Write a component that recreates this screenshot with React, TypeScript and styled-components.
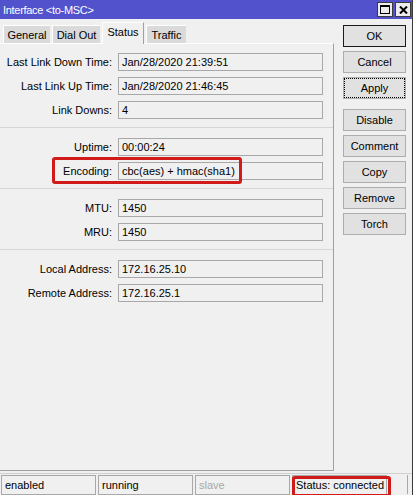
import React from 'react';
import styled, { createGlobalStyle, css } from 'styled-components';

const GlobalStyle = createGlobalStyle`
  html, body {
    margin: 0;
    padding: 0;
    background: #fff;
  }
  body {
    font-family: 'Liberation Sans', Arial, sans-serif;
    font-size: 11px;
  }
  * {
    box-sizing: border-box;
  }
`;

const Window = styled.div`
  width: 413px;
  height: 495px;
  display: flex;
  flex-direction: column;
  background: #f0f0f0;
  border-right: 1px solid #3a3a3a;
  color: #000;
`;

const TitleBar = styled.div`
  height: 19px;
  flex: none;
  display: flex;
  align-items: center;
  padding: 0 1px 0 3px;
  background: #5252cd;
  color: #fff;
`;

const Title = styled.span`
  font-size: 11px;
  letter-spacing: -0.3px;
`;

const TitleButtons = styled.div`
  margin-left: auto;
  display: flex;
  gap: 2px;
`;

const TitleButton = styled.div`
  width: 16px;
  height: 15px;
  display: flex;
  align-items: center;
  justify-content: center;
  background: #ececec;
  border: 1px solid #3c3c3c;
`;

const Main = styled.div`
  flex: 1;
  display: flex;
  min-height: 0;
`;

const LeftColumn = styled.div`
  width: 334px;
  display: flex;
  flex-direction: column;
  padding-top: 3px;
`;

const TabStrip = styled.div`
  height: 21px;
  flex: none;
  display: flex;
  align-items: flex-end;
  gap: 2px;
  padding-left: 3px;
  position: relative;
  z-index: 1;
`;

const Tab = styled.div<{ $active?: boolean; $width: number }>`
  width: ${(p) => p.$width}px;
  height: 18px;
  display: flex;
  align-items: center;
  justify-content: center;
  background: #dadada;
  border-top: 1px solid #fff;
  border-left: 1px solid #fff;
  white-space: nowrap;

  ${(p) =>
    p.$active &&
    css`
      height: 22px;
      margin-bottom: -1px;
      padding-bottom: 4px;
      background: #f0f0f0;
      border-right: 1px solid #a0a0a0;
    `}
`;

const Panel = styled.div`
  flex: 1;
  border-top: 1px solid #fff;
  border-right: 1px solid #a0a0a0;
  border-bottom: 1px solid #a0a0a0;
`;

const Section = styled.div`
  display: flex;
  flex-direction: column;
  gap: 6px;
  padding: 9px 0 8px;

  & + & {
    border-top: 1px solid #d6d6d6;
    padding-top: 10px;
  }
`;

const Row = styled.div`
  position: relative;
  display: grid;
  grid-template-columns: 112px 205px;
  column-gap: 6px;
  align-items: center;
  height: 18px;
`;

const Label = styled.span`
  text-align: right;
  white-space: nowrap;
`;

const Field = styled.div`
  height: 18px;
  display: flex;
  align-items: center;
  padding: 0 3px;
  border: 1px solid #a8a8a8;
  background: #f0f0f0;
  white-space: nowrap;
`;

const Highlight = styled.div<{ $left: number; $top: number; $width: number; $height: number }>`
  position: absolute;
  left: ${(p) => p.$left}px;
  top: ${(p) => p.$top}px;
  width: ${(p) => p.$width}px;
  height: ${(p) => p.$height}px;
  border: 3px solid #d11a1a;
  border-radius: 3px;
  pointer-events: none;
`;

const ButtonColumn = styled.div`
  display: flex;
  flex-direction: column;
  gap: 4px;
  padding-top: 6px;
  margin-left: 9px;
`;

const Button = styled.button<{ $default?: boolean; $focused?: boolean; $spaced?: boolean }>`
  width: 63px;
  height: 22px;
  padding: 0;
  font: inherit;
  font-size: 11px;
  color: #000;
  background: #e1e1e1;
  border: 1px solid #adadad;
  border-radius: 0;

  ${(p) =>
    p.$default &&
    css`
      border-color: #1a1a1a;
    `}
  ${(p) =>
    p.$focused &&
    css`
      outline: 1px dotted #000;
      outline-offset: -2px;
    `}
  ${(p) =>
    p.$spaced &&
    css`
      margin-top: 6px;
    `}
`;

const StatusBar = styled.div`
  position: relative;
  height: 22px;
  flex: none;
  margin-top: 2px;
  display: flex;
  gap: 2px;
  padding: 1px 0 1px 1px;
  border-top: 1px solid #d0d0d0;
`;

const StatusCell = styled.div<{ $dim?: boolean }>`
  position: relative;
  width: 95px;
  height: 20px;
  display: flex;
  align-items: center;
  padding: 0 3px;
  border: 1px solid #a8a8a8;
  color: ${(p) => (p.$dim ? '#a8a8a8' : '#000')};
  white-space: nowrap;
`;

const StatusEnd = styled.div`
  margin-left: auto;
  width: 5px;
  border-left: 1px solid #a8a8a8;
`;

const MaximizeIcon = () => (
  <svg width="10" height="9" viewBox="0 0 10 9">
    <rect x="0.5" y="0.5" width="9" height="8" fill="none" stroke="#000" />
    <rect x="0" y="0" width="10" height="2" fill="#000" />
  </svg>
);

const CloseIcon = () => (
  <svg width="9" height="8" viewBox="0 0 9 8">
    <path d="M1 0.5 L8 7.5 M8 0.5 L1 7.5" stroke="#000" strokeWidth="2" />
  </svg>
);

type Item = { label: string; value: string; mark?: boolean };

const sections: Item[][] = [
  [
    { label: 'Last Link Down Time:', value: 'Jan/28/2020 21:39:51' },
    { label: 'Last Link Up Time:', value: 'Jan/28/2020 21:46:45' },
    { label: 'Link Downs:', value: '4' },
  ],
  [
    { label: 'Uptime:', value: '00:00:24' },
    { label: 'Encoding:', value: 'cbc(aes) + hmac(sha1)', mark: true },
  ],
  [
    { label: 'MTU:', value: '1450' },
    { label: 'MRU:', value: '1450' },
  ],
  [
    { label: 'Local Address:', value: '172.16.25.10' },
    { label: 'Remote Address:', value: '172.16.25.1' },
  ],
];

const tabs = [
  { name: 'General', width: 47 },
  { name: 'Dial Out', width: 48 },
  { name: 'Status', width: 42 },
  { name: 'Traffic', width: 40 },
];

export default function App() {
  return (
    <>
      <GlobalStyle />
      <Window>
        <TitleBar>
          <Title>Interface &lt;to-MSC&gt;</Title>
          <TitleButtons>
            <TitleButton>
              <MaximizeIcon />
            </TitleButton>
            <TitleButton>
              <CloseIcon />
            </TitleButton>
          </TitleButtons>
        </TitleBar>
        <Main>
          <LeftColumn>
            <TabStrip>
              {tabs.map((t) => (
                <Tab key={t.name} $width={t.width} $active={t.name === 'Status'}>
                  {t.name}
                </Tab>
              ))}
            </TabStrip>
            <Panel>
              {sections.map((items, i) => (
                <Section key={i}>
                  {items.map((it) => (
                    <Row key={it.label}>
                      <Label>{it.label}</Label>
                      <Field>{it.value}</Field>
                      {it.mark && <Highlight $left={52} $top={-5} $width={190} $height={27} />}
                    </Row>
                  ))}
                </Section>
              ))}
            </Panel>
          </LeftColumn>
          <ButtonColumn>
            <Button $default>OK</Button>
            <Button>Cancel</Button>
            <Button $focused>Apply</Button>
            <Button $spaced>Disable</Button>
            <Button>Comment</Button>
            <Button>Copy</Button>
            <Button>Remove</Button>
            <Button>Torch</Button>
          </ButtonColumn>
        </Main>
        <StatusBar>
          <StatusCell>enabled</StatusCell>
          <StatusCell>running</StatusCell>
          <StatusCell $dim>slave</StatusCell>
          <StatusCell>
            Status: connected
            <Highlight $left={-1} $top={0} $width={99} $height={21} />
          </StatusCell>
          <StatusEnd />
        </StatusBar>
      </Window>
    </>
  );
}
